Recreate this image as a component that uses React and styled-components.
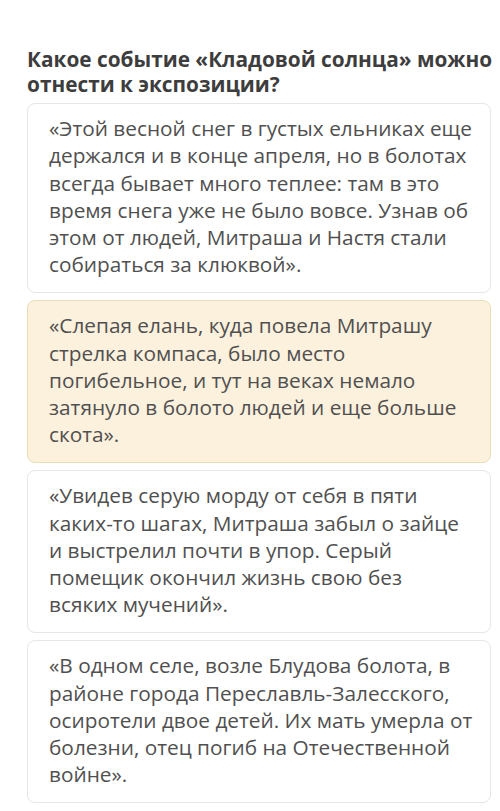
import React from 'react';
import styled, { createGlobalStyle } from 'styled-components';

const answers = [
  {
    id: 1,
    text:
      '«Этой весной снег в густых ельниках еще держался и в конце апреля, но в болотах всегда бывает много теплее: там в это время снега уже не было вовсе. Узнав об этом от людей, Митраша и Настя стали собираться за клюквой».'
  },
  {
    id: 2,
    selected: true,
    text:
      '«Слепая елань, куда повела Митрашу стрелка компаса, было место погибельное, и тут на веках немало затянуло в болото людей и еще больше скота».'
  },
  {
    id: 3,
    text:
      '«Увидев серую морду от себя в пяти каких-то шагах, Митраша забыл о зайце и\u00a0выстрелил почти в упор. Серый помещик окончил жизнь свою без всяких\u00a0мучений».'
  },
  {
    id: 4,
    text:
      '«В одном селе, возле Блудова болота, в районе города Переславль-Залесского, осиротели двое детей. Их мать умерла от болезни, отец погиб на Отечественной войне».'
  }
];

export default function App() {
  return (
    <>
      <GlobalStyle />
      <Page>
        <Question>Какое событие «Кладовой солнца» можно отнести к экспозиции?</Question>
        <AnswerList>
          {answers.map(a => (
            <Answer key={a.id} selected={a.selected}>
              {a.text}
            </Answer>
          ))}
        </AnswerList>
      </Page>
    </>
  );
}

const GlobalStyle = createGlobalStyle`
  html, body {
    margin: 0;
    padding: 0;
    background: #ffffff;
  }

  body {
    font-family: 'Open Sans', 'Noto Sans', sans-serif;
    -webkit-font-smoothing: antialiased;
  }
`;

const Page = styled.div`
  width: 500px;
  height: 811px;
  overflow: hidden;
  box-sizing: border-box;
  padding: 47px 9px 0 27px;
`;

const Question = styled.h2`
  margin: 0 -9px 6px 0;
  font-size: 20.8px;
  line-height: 25px;
  font-weight: 700;
  color: #3d3d3d;
`;

const AnswerList = styled.div`
  display: flex;
  flex-direction: column;
  gap: 7px;
`;

const Answer = styled.div`
  box-sizing: border-box;
  padding: 11px 12px 13.5px 21px;
  border-radius: 8px;
  border: 1.5px solid ${p => (p.selected ? '#eadcb6' : '#e6e6e6')};
  background: ${p => (p.selected ? '#fcf1dd' : '#ffffff')};
  font-size: 20.8px;
  line-height: 27.3px;
  color: #505050;
`;
